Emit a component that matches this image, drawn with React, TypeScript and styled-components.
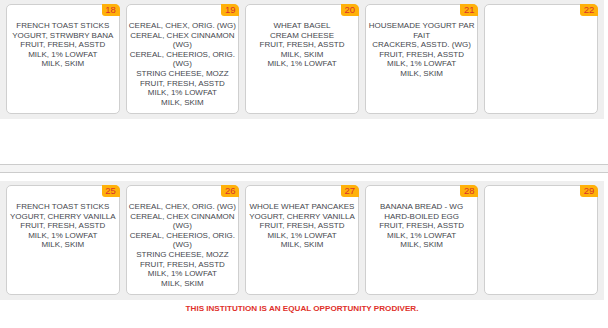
import styled, { createGlobalStyle } from "styled-components";

type Day = {
  date: number;
  items: string[];
};

const weeks: Day[][] = [
  [
    {
      date: 18,
      items: ["FRENCH TOAST STICKS", "YOGURT, STRWBRY BANA", "FRUIT, FRESH, ASSTD", "MILK, 1% LOWFAT", "MILK, SKIM"],
    },
    {
      date: 19,
      items: [
        "CEREAL, CHEX, ORIG. (WG)",
        "CEREAL, CHEX CINNAMON (WG)",
        "CEREAL, CHEERIOS, ORIG. (WG)",
        "STRING CHEESE, MOZZ",
        "FRUIT, FRESH, ASSTD",
        "MILK, 1% LOWFAT",
        "MILK, SKIM",
      ],
    },
    {
      date: 20,
      items: ["WHEAT BAGEL", "CREAM CHEESE", "FRUIT, FRESH, ASSTD", "MILK, SKIM", "MILK, 1% LOWFAT"],
    },
    {
      date: 21,
      items: [
        "HOUSEMADE YOGURT PAR FAIT",
        "CRACKERS, ASSTD. (WG)",
        "FRUIT, FRESH, ASSTD",
        "MILK, 1% LOWFAT",
        "MILK, SKIM",
      ],
    },
    { date: 22, items: [] },
  ],
  [
    {
      date: 25,
      items: ["FRENCH TOAST STICKS", "YOGURT, CHERRY VANILLA", "FRUIT, FRESH, ASSTD", "MILK, 1% LOWFAT", "MILK, SKIM"],
    },
    {
      date: 26,
      items: [
        "CEREAL, CHEX, ORIG. (WG)",
        "CEREAL, CHEX CINNAMON (WG)",
        "CEREAL, CHEERIOS, ORIG. (WG)",
        "STRING CHEESE, MOZZ",
        "FRUIT, FRESH, ASSTD",
        "MILK, 1% LOWFAT",
        "MILK, SKIM",
      ],
    },
    {
      date: 27,
      items: ["WHOLE WHEAT PANCAKES", "YOGURT, CHERRY VANILLA", "FRUIT, FRESH, ASSTD", "MILK, 1% LOWFAT", "MILK, SKIM"],
    },
    {
      date: 28,
      items: ["BANANA BREAD - WG", "HARD-BOILED EGG", "FRUIT, FRESH, ASSTD", "MILK, 1% LOWFAT", "MILK, SKIM"],
    },
    { date: 29, items: [] },
  ],
];

const GlobalStyle = createGlobalStyle`
  html, body {
    margin: 0;
    padding: 0;
    background: #fff;
  }
  body {
    font-family: "Liberation Sans", Arial, sans-serif;
  }
`;

const Page = styled.div`
  width: 608px;
  display: flex;
  flex-direction: column;
`;

const Week = styled.div`
  width: 604px;
  box-sizing: border-box;
  background: #efefef;
  display: flex;
  gap: 6px;
  padding: 4px 6px 5px 6px;
`;

const Card = styled.div`
  position: relative;
  flex: 1;
  min-width: 0;
  height: 110px;
  box-sizing: border-box;
  background: #fff;
  border: 1px solid #cfcfcf;
  border-radius: 5px;
  padding: 16px 1px 0;
  text-align: center;
`;

const Badge = styled.span`
  position: absolute;
  top: -1px;
  right: -1px;
  width: 18px;
  height: 12px;
  background: #ffb10a;
  color: #d8322c;
  font-size: 9.5px;
  line-height: 12px;
  text-align: center;
  border-radius: 0 5px 0 3px;
`;

const Item = styled.div`
  font-size: 8px;
  line-height: 9.6px;
  color: #45474e;
`;

const Spacer = styled.div`
  height: 45px;
`;

const Divider = styled.div`
  height: 7px;
  background: #f4f4f4;
  border-top: 1px solid #cccccc;
  border-bottom: 1px solid #cccccc;
  margin-bottom: 8px;
`;

const Footer = styled.div`
  width: 604px;
  text-align: center;
  padding-top: 4px;
  font-size: 8.1px;
  line-height: 10px;
  font-weight: 700;
  color: #e0302a;
`;

export default function App() {
  return (
    <Page>
      <GlobalStyle />
      <Week>
        {weeks[0].map((d) => (
          <Card key={d.date}>
            <Badge>{d.date}</Badge>
            {d.items.map((it, i) => (
              <Item key={i}>{it}</Item>
            ))}
          </Card>
        ))}
      </Week>
      <Spacer />
      <Divider />
      <Week>
        {weeks[1].map((d) => (
          <Card key={d.date}>
            <Badge>{d.date}</Badge>
            {d.items.map((it, i) => (
              <Item key={i}>{it}</Item>
            ))}
          </Card>
        ))}
      </Week>
      <Footer>THIS INSTITUTION IS AN EQUAL OPPORTUNITY PRODIVER.</Footer>
    </Page>
  );
}
